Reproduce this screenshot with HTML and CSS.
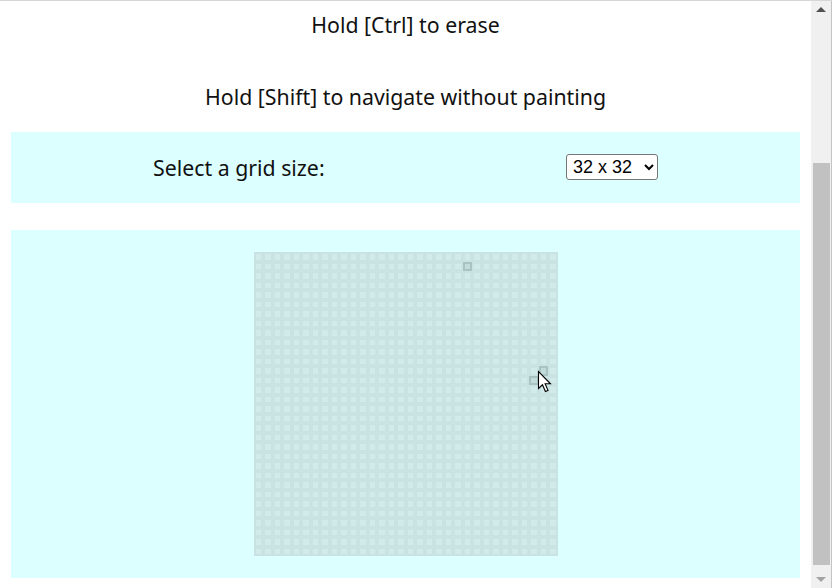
FILE: index.html
```html
<!DOCTYPE html>
<html lang="en">
<head>
<meta charset="utf-8">
<title>Etch-a-Sketch</title>
<link rel="stylesheet" href="styles.css">
</head>
<body>
<div class="app">
  <main class="page">
    <header class="intro">
      <p class="hint">Hold [Ctrl] to erase</p>
      <p class="hint">Hold [Shift] to navigate without painting</p>
    </header>
    <section class="panel controls">
      <label class="controls-label" for="size">Select a grid size:</label>
      <select class="size-select" id="size">
        <option>16 x 16</option>
        <option selected>32 x 32</option>
        <option>64 x 64</option>
      </select>
    </section>
    <section class="panel board">
      <div class="canvas-wrap">
        <div class="grid" id="grid"></div>
        <svg class="cursor" width="15" height="24" viewBox="0 0 15 24">
          <path d="M1.5 1.5 L1.5 18.5 L5.5 14.8 L8.4 21.5 L11 20.4 L8.1 13.8 L13.5 13.8 Z" fill="#fff" stroke="#000" stroke-width="1.1" stroke-linejoin="miter"/>
        </svg>
      </div>
    </section>
  </main>
  <div class="scrollbar" aria-hidden="true">
    <div class="sb-button sb-up"><span class="arrow-up"></span></div>
    <div class="sb-track"><div class="sb-thumb"></div></div>
    <div class="sb-button sb-down"><span class="arrow-down"></span></div>
  </div>
</div>
<script src="script.js"></script>
</body>
</html>
```
FILE: styles.css
```css
html, body {
  margin: 0;
  height: 100%;
  overflow: hidden;
  background: #fff;
}
body {
  font-family: "Noto Sans", "Open Sans", sans-serif;
  color: #111;
}
.app {
  display: flex;
  height: 100%;
  box-sizing: border-box;
  border-top: 1px solid #d6d6d6;
}
.page {
  width: 811px;
  flex: none;
  box-sizing: border-box;
  padding: 0 11px;
}
.intro {
  display: flex;
  flex-direction: column;
  align-items: center;
  gap: 48px;
  padding-top: 12px;
}
.hint {
  margin: 0;
  font-size: 21.3px;
  line-height: 24px;
}
.panel {
  background: #dcffff;
}
.controls {
  margin-top: 23px;
  height: 71px;
  box-sizing: border-box;
  display: flex;
  align-items: center;
  justify-content: space-between;
  padding: 0 142px;
}
.controls-label {
  font-size: 21.3px;
  line-height: 24px;
}
.size-select {
  font-family: "Liberation Sans", Arial, sans-serif;
  font-size: 18px;
  height: 26px;
  width: 92px;
  padding: 0 2px;
  border: 1px solid #767676;
  border-radius: 3px;
  background: #fff;
  color: #000;
  margin-top: -1px;
}
.board {
  margin-top: 27px;
  height: 348px;
  box-sizing: border-box;
  padding-top: 22px;
  display: flex;
  justify-content: center;
  align-items: flex-start;
}
.canvas-wrap {
  position: relative;
  width: 304px;
  height: 304px;
}
.grid {
  width: 304px;
  height: 304px;
  display: grid;
  grid-template-columns: repeat(32, 1fr);
  grid-template-rows: repeat(32, 1fr);
  background: #c9e3e3;
}
.cell {
  box-sizing: border-box;
  border: 2px solid #c9e3e3;
  background: #d2eaea;
}
.cell.hovered {
  border-color: #a9c3c3;
  background: #c2dbdb;
}
.cursor {
  position: absolute;
  left: 283px;
  top: 118px;
}
.scrollbar {
  flex: 1;
  display: flex;
  flex-direction: column;
  background: #f0f0f0;
  border-right: 1px solid #c4c4c4;
}
.sb-button {
  height: 17px;
  flex: none;
  display: flex;
  align-items: center;
  justify-content: center;
}
.arrow-up {
  width: 0;
  height: 0;
  border-left: 5px solid transparent;
  border-right: 5px solid transparent;
  border-bottom: 5px solid #505050;
}
.arrow-down {
  width: 0;
  height: 0;
  border-left: 5px solid transparent;
  border-right: 5px solid transparent;
  border-top: 5px solid #a3a3a3;
}
.sb-track {
  flex: 1;
  padding: 0 1px 0 2px;
}
.sb-thumb {
  margin-top: 145px;
  height: 402px;
  background: #c1c1c1;
}
```
FILE: script.js
```js
(function () {
  var grid = document.getElementById('grid');
  var size = 32;
  var marked = { '1-22': true, '12-30': true, '13-29': true };
  for (var r = 0; r < size; r++) {
    for (var c = 0; c < size; c++) {
      var cell = document.createElement('div');
      cell.className = 'cell' + (marked[r + '-' + c] ? ' hovered' : '');
      grid.appendChild(cell);
    }
  }
})();
```
